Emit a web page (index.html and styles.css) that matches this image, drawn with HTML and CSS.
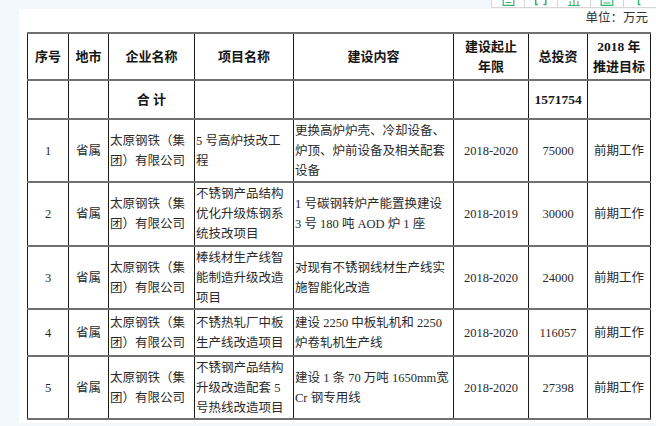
FILE: index.html
```html
<!DOCTYPE html>
<html lang="zh-CN">
<head>
<meta charset="utf-8">
<title>项目表</title>
<link rel="stylesheet" href="styles.css">
</head>
<body>
<div class="toolbar">
  <div class="tool">
    <svg class="ico" width="33" height="7" viewBox="0 0 33 7"><path d="M11.5 0 V5.5 H22.5 V0" fill="none" stroke="#34b36a" stroke-width="1.2"/><path d="M14 2.5 H20" stroke="#34b36a" stroke-width="1"/></svg>
  </div>
  <div class="tool">
    <svg class="ico" width="33" height="7" viewBox="0 0 33 7"><path d="M11 0 V4.5 H13.5 M21.5 0 V4.5 H19" fill="none" stroke="#34b36a" stroke-width="1.6"/></svg>
  </div>
  <div class="tool">
    <svg class="ico" width="33" height="7" viewBox="0 0 33 7"><path d="M10.5 5.5 H22.5 M12.5 1 V5 M16.5 0 V5 M20.5 1 V5" fill="none" stroke="#34b36a" stroke-width="1.1"/></svg>
  </div>
  <div class="tool">
    <svg class="ico" width="33" height="7" viewBox="0 0 33 7"><path d="M10.5 0 V5.5 H22.5 V0" fill="none" stroke="#34b36a" stroke-width="1.2"/><path d="M13 3 H20" stroke="#34b36a" stroke-width="1"/></svg>
  </div>
  <div class="tool last">
    <svg class="ico" width="33" height="7" viewBox="0 0 33 7"><path d="M14.5 0 V4.5 H16.5" fill="none" stroke="#34b36a" stroke-width="1.4"/></svg>
  </div>
</div>

<div class="page">
  <div class="unit">单位：万元</div>
  <table class="grid">
    <colgroup>
      <col class="w1"><col class="w2"><col class="w3"><col class="w4"><col class="w5"><col class="w6"><col class="w7"><col class="w8">
    </colgroup>
    <tr class="h-head">
      <th>序号</th>
      <th>地市</th>
      <th>企业名称</th>
      <th>项目名称</th>
      <th>建设内容</th>
      <th>建设起止<br>年限</th>
      <th>总投资</th>
      <th><span class="num">2018</span> 年<br>推进目标</th>
    </tr>
    <tr class="h-total">
      <th></th>
      <th></th>
      <th>合 计</th>
      <th></th>
      <th></th>
      <th></th>
      <th><span class="num">1571754</span></th>
      <th></th>
    </tr>
    <tr class="h-3">
      <td class="c num">1</td>
      <td class="c">省属</td>
      <td>太原钢铁（集<br>团）有限公司</td>
      <td>5 号高炉技改工<br>程</td>
      <td>更换高炉炉壳、冷却设备、<br>炉顶、炉前设备及相关配套<br>设备</td>
      <td class="c num">2018-2020</td>
      <td class="c num">75000</td>
      <td class="c">前期工作</td>
    </tr>
    <tr class="h-3b">
      <td class="c num">2</td>
      <td class="c">省属</td>
      <td>太原钢铁（集<br>团）有限公司</td>
      <td>不锈钢产品结构<br>优化升级炼钢系<br>统技改项目</td>
      <td>1 号碳钢转炉产能置换建设<br>3 号 180 吨 AOD 炉 1 座</td>
      <td class="c num">2018-2019</td>
      <td class="c num">30000</td>
      <td class="c">前期工作</td>
    </tr>
    <tr class="h-3">
      <td class="c num">3</td>
      <td class="c">省属</td>
      <td>太原钢铁（集<br>团）有限公司</td>
      <td>棒线材生产线智<br>能制造升级改造<br>项目</td>
      <td>对现有不锈钢线材生产线实<br>施智能化改造</td>
      <td class="c num">2018-2020</td>
      <td class="c num">24000</td>
      <td class="c">前期工作</td>
    </tr>
    <tr class="h-2">
      <td class="c num">4</td>
      <td class="c">省属</td>
      <td>太原钢铁（集<br>团）有限公司</td>
      <td>不锈热轧厂中板<br>生产线改造项目</td>
      <td>建设 2250 中板轧机和 2250<br>炉卷轧机生产线</td>
      <td class="c num">2018-2020</td>
      <td class="c num">116057</td>
      <td class="c">前期工作</td>
    </tr>
    <tr class="h-3">
      <td class="c num">5</td>
      <td class="c">省属</td>
      <td>太原钢铁（集<br>团）有限公司</td>
      <td>不锈钢产品结构<br>升级改造配套 5<br>号热线改造项目</td>
      <td>建设 1 条 70 万吨 1650mm宽<br>Cr 钢专用线</td>
      <td class="c num">2018-2020</td>
      <td class="c num">27398</td>
      <td class="c">前期工作</td>
    </tr>
  </table>
</div>
</body>
</html>
```

FILE: styles.css
```css
html, body {
  margin: 0;
  padding: 0;
}

body {
  background: #f2f8fc;
  font-family: "Liberation Serif", "Noto Sans CJK SC", serif;
  color: #2a2a2a;
  overflow: hidden;
}

.toolbar {
  position: absolute;
  top: 0;
  left: 491px;
  width: 165px;
  height: 7px;
  display: flex;
  background: #fff;
  border-left: 1px solid #d6d6d6;
  border-bottom: 1px solid #d6d6d6;
}

.tool {
  width: 33px;
  height: 7px;
  border-right: 1px solid #d6d6d6;
  box-sizing: border-box;
  display: flex;
}

.tool.last {
  border-right: none;
}

.ico {
  display: block;
}

.page {
  margin: 9px 0 0 19px;
  height: 414px;
  background: #fff;
}

.unit {
  height: 23px;
  line-height: 15px;
  padding-right: 8px;
  text-align: right;
  font-family: "Noto Sans CJK SC", sans-serif;
  font-size: 12.5px;
  color: #333;
}

.grid {
  margin-left: 8px;
  border-collapse: collapse;
  table-layout: fixed;
  width: 623px;
}

.w1 { width: 41px; }
.w2 { width: 40px; }
.w3 { width: 86px; }
.w4 { width: 99px; }
.w5 { width: 160px; }
.w6 { width: 75px; }
.w7 { width: 59px; }
.w8 { width: 63px; }

.grid td,
.grid th {
  padding: 0 1px;
  border-left: 1px solid #1a1a1a;
  border-right: 1px solid #1a1a1a;
  border-top: 2px solid #707070;
  border-bottom: 2px solid #707070;
  font-size: 12.5px;
  line-height: 20px;
  vertical-align: middle;
  white-space: nowrap;
  overflow: hidden;
  text-align: left;
  color: #2a2a2a;
}

.grid th {
  font-family: "Liberation Serif", "Noto Sans CJK SC", sans-serif;
  font-size: 13px;
  font-weight: 700;
  text-align: center;
  color: #151515;
}

.grid td.c {
  text-align: center;
}

.num {
  font-family: "Liberation Serif", serif;
  font-size: 13.5px;
}

th .num {
  font-size: 13.5px;
}

.h-head { height: 47px; }
.h-total { height: 39px; }
.h-3 { height: 63px; }
.h-3b { height: 64px; }
.h-2 { height: 47px; }
```
